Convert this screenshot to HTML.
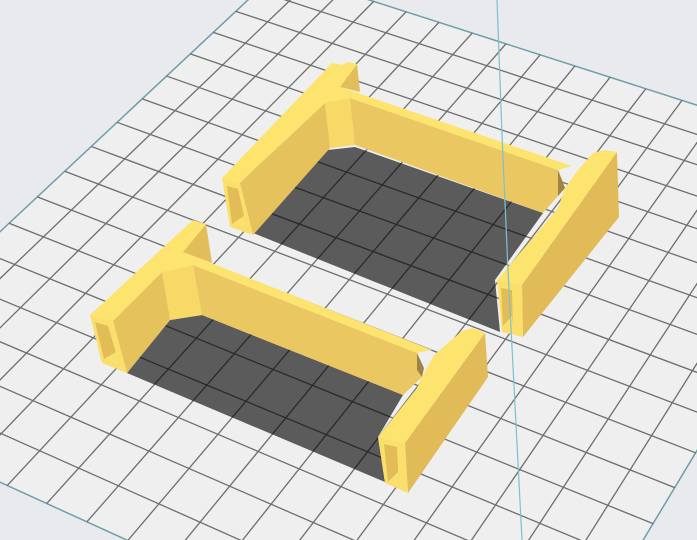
<!DOCTYPE html>
<html><head><meta charset="utf-8"><style>
html,body{margin:0;padding:0;background:#e9eaee;width:697px;height:540px;overflow:hidden;}
svg{display:block}
</style></head><body>
<svg id="s" width="697" height="540" viewBox="0 0 697 540" xmlns="http://www.w3.org/2000/svg">
<rect width="697" height="540" fill="#e9eaee"/>
<polygon points="279,-29 871,161 532,725 -180,400" fill="#efefef" stroke="#6d9eab" stroke-width="1.5"/>
<g id="grid" stroke="#6e6e6e" stroke-width="1.3" fill="none"></g>
<polygon points="253,233 328,150 355,147 543,213 495,280 500,332" fill="#000" fill-opacity="0.62"/>
<polygon points="127,373 170,320 202,315 403,395 378,437 385,482" fill="#000" fill-opacity="0.62"/>
<g>
<polygon points="325,103 350,98 355,145 330,148" fill="#f8d866"/>
<polygon points="350,98 558,170 565,188 558,196 543,213 355,145" fill="#eac761"/>
<polygon points="558,170 565,188 558,196" fill="#9c8540"/>
<polygon points="340,87 572,166 558,170 350,98 325,103" fill="#fde46f"/>
<polygon points="340,87 357,64 360,92" fill="#e2be5a"/>
<polygon points="222,178 332,63 342,65 348,62 357,64 340,87 325,103 240,183" fill="#fde46f"/>
<polygon points="240,183 325,103 330,148 253,235" fill="#e6c25d"/>
<polygon points="222,178 240,183 253,235 230,227" fill="#fbdf6c"/>
<polygon points="227,186 238,189 247,229 232,224" fill="#e2bd57"/>
<polygon points="232,224 247,229 244,216" fill="#fbe06e"/>
<polygon points="497,280 558,208 565,188 578,170 593,153 604,150 617,152 522,285" fill="#fde46f"/>
<polygon points="522,285 617,152 619,217 523,337" fill="#e0bb57"/>
<polygon points="497,280 522,285 523,337 502,332" fill="#fbdf6c"/>
<polygon points="501,288 512,290 513,327 503,326" fill="#e2bd57"/>
<polygon points="503,326 513,327 512,316" fill="#fbe06e"/>
</g>
<g>
<polygon points="162,272 193,265 202,315 170,320" fill="#f8d866"/>
<polygon points="193,265 417,353 422,377 403,395 202,315" fill="#eac761"/>
<polygon points="417,353 424,368 422,377 417,370" fill="#9c8540"/>
<polygon points="183,252 432,350 417,353 193,265 162,272" fill="#fde46f"/>
<polygon points="183,252 206,224 212,263" fill="#e2be5a"/>
<polygon points="90,315 193,220 199,222 206,224 183,252 162,272 113,321" fill="#fde46f"/>
<polygon points="113,321 162,272 170,320 127,373" fill="#e6c25d"/>
<polygon points="90,315 113,321 127,373 102,363" fill="#fbdf6c"/>
<polygon points="95,322 108,326 120,366 104,359" fill="#e2bd57"/>
<polygon points="104,359 120,366 116,352" fill="#fbe06e"/>
<polygon points="378,437 417,388 422,377 434,355 462,331 473,328 485,333 405,443" fill="#fde46f"/>
<polygon points="405,443 485,333 488,377 408,493" fill="#e0bb57"/>
<polygon points="378,437 405,443 408,493 385,483" fill="#fbdf6c"/>
<polygon points="384,444 397,447 399,487 388,482" fill="#e2bd57"/>
<polygon points="388,482 399,487 398,472" fill="#fbe06e"/>
</g>
<polyline points="497,0 502,135 508,270 515,405 522,540" fill="none" stroke="#7cc0cf" stroke-width="1.2"/>
</svg>
<script>
(function(){
var P=[[279,-29],[871,161],[532,725],[-180,400]];
var x0=P[0][0],y0=P[0][1],x1=P[1][0],y1=P[1][1],x2=P[2][0],y2=P[2][1],x3=P[3][0],y3=P[3][1];
var dx1=x1-x2,dx2=x3-x2,dx3=x0-x1+x2-x3,dy1=y1-y2,dy2=y3-y2,dy3=y0-y1+y2-y3;
var den=dx1*dy2-dx2*dy1;
var g=(dx3*dy2-dx2*dy3)/den,h=(dx1*dy3-dx3*dy1)/den;
var a=x1-x0+g*x1,b=x3-x0+h*x3,c=x0,d=y1-y0+g*y1,e=y3-y0+h*y3,f=y0;
function m(u,v){var w=g*u+h*v+1;return [(a*u+b*v+c)/w,(d*u+e*v+f)/w];}
var N=17,s='';
for(var i=1;i<N;i++){var t=i/N;
var p=m(t,0),q=m(t,1);s+='<line x1="'+p[0]+'" y1="'+p[1]+'" x2="'+q[0]+'" y2="'+q[1]+'"/>';
p=m(0,t);q=m(1,t);s+='<line x1="'+p[0]+'" y1="'+p[1]+'" x2="'+q[0]+'" y2="'+q[1]+'"/>';}
document.getElementById('grid').innerHTML=s;
})();
</script>
</body></html>
